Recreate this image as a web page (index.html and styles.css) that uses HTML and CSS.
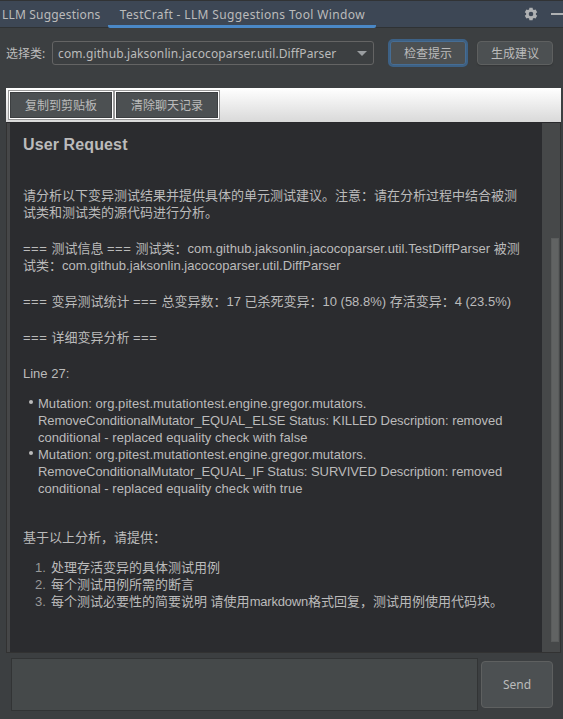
FILE: index.html
```html
<!DOCTYPE html>
<html lang="zh-CN">
<head>
<meta charset="utf-8">
<title>TestCraft</title>
<link rel="stylesheet" href="styles.css">
</head>
<body>
<div class="window">
  <header class="tabs">
    <div class="tab tab-first">LLM Suggestions</div>
    <div class="tab tab-active">TestCraft - LLM Suggestions Tool Window</div>
    <div class="tab-actions">
      <svg class="gear" width="14" height="14" viewBox="0 0 14 14"><path fill="#afb1b3" fill-rule="evenodd" d="M5.4 .7h3.2l.3 1.7 1.1.6 1.6-.6 1.6 2.8-1.3 1.1v1.4l1.3 1.1-1.6 2.8-1.6-.6-1.1.6-.3 1.7H5.4l-.3-1.7L4 11l-1.6.6L.8 8.800l1.300-1.100V6.300L.8 5.200l1.600-2.800L4 3l1.100-.6zM7 4.700a2.300 2.300 0 1 0 0 4.600a2.300 2.300 0 1 0 0-4.600z"/></svg>
      <span class="minimize"></span>
    </div>
  </header>
  <div class="toolbar">
    <span class="label">选择类:</span>
    <div class="combo"><span class="combo-text">com.github.jaksonlin.jacocoparser.util.DiffParser</span><span class="arrow"></span></div>
    <button class="btn focused">检查提示</button>
    <button class="btn suggest">生成建议</button>
  </div>
  <div class="chat-bar">
    <button class="chat-btn">复制到剪贴板</button>
    <button class="chat-btn">清除聊天记录</button>
  </div>
  <main class="chat">
    <article class="content">
      <h1>User Request</h1>
      <p class="intro">请分析以下变异测试结果并提供具体的单元测试建议。注意：请在分析过程中结合被测<br>试类和测试类的源代码进行分析。</p>
      <p><span class="eq">=== </span>测试信息 <span class="eq">=== </span>测试类：<span class="pkg">com.github.jaksonlin.jacocoparser.util.TestDiffParser</span> 被测<br>试类：<span class="pkg">com.github.jaksonlin.jacocoparser.util.DiffParser</span></p>
      <p><span class="eq">=== </span>变异测试统计 <span class="eq">=== </span>总变异数：17 已杀死变异：10 (58.8%) 存活变异：4 (23.5%)</p>
      <p><span class="eq">=== </span>详细变异分析 <span class="eq">=== </span></p>
      <p>Line 27:</p>
      <ul>
        <li><span class="pkg">Mutation: org.pitest.mutationtest.engine.gregor.mutators.</span><br><span class="tight">RemoveConditionalMutator_EQUAL_ELSE Status: KILLED Description: removed</span><br><span class="pkg">conditional - replaced equality check with false</span></li>
        <li><span class="pkg">Mutation: org.pitest.mutationtest.engine.gregor.mutators.</span><br><span class="tight">RemoveConditionalMutator_EQUAL_IF Status: SURVIVED Description: removed</span><br><span class="pkg">conditional - replaced equality check with true</span></li>
      </ul>
      <p class="ask">基于以上分析，请提供：</p>
      <ol>
        <li><span class="num">1.</span>处理存活变异的具体测试用例</li>
        <li><span class="num">2.</span>每个测试用例所需的断言</li>
        <li><span class="num">3.</span>每个测试必要性的简要说明 请使用<span class="word">markdown</span>格式回复，测试用例使用代码块。</li>
      </ol>
    </article>
    <div class="scrollbar"><div class="thumb"></div></div>
  </main>
  <footer class="composer">
    <div class="input"></div>
    <button class="btn send">Send</button>
  </footer>
</div>
</body>
</html>
```
FILE: styles.css
```css
* { box-sizing: border-box; }
body { margin: 0; background: #3c3f41; }
button { margin: 0; padding: 0; font: inherit; color: inherit; }
.window {
  width: 563px; height: 719px; overflow: hidden;
  display: flex; flex-direction: column;
  background: #3c3f41; color: #bbbbbb;
  font: 12px/18px "Noto Sans", "Noto Sans CJK SC", sans-serif;
  white-space: nowrap;
}
.tabs {
  display: flex; height: 28px; flex: none;
  background: #3d4755;
  border-top: 1px solid #313335; border-bottom: 1px solid #2f3234;
}
.tab { line-height: 27px; height: 27px; }
.tab-first { width: 108px; padding-left: 2px; letter-spacing: .18px; }
.tab-active { width: 269px; padding-left: 12px; letter-spacing: .36px; border-bottom: 3px solid #4a88c7; border-radius: 0 0 2px 2px; }
.tab-actions { display: flex; flex: 1; padding: 6px 0 0 148px; }
.gear { flex: none; }
.minimize { flex: none; width: 12px; height: 2px; margin: 6px 0 0 13px; background: #afb1b3; }
.toolbar { display: flex; align-items: center; height: 50px; flex: none; padding-left: 6px; }
.label { width: 46px; padding-top: 2px; }
.combo {
  display: flex; align-items: center; justify-content: space-between;
  width: 322px; height: 24px; padding: 0 6px 0 5px;
  border: 1px solid #646464; border-radius: 3px;
}
.combo-text { padding-top: 2px; letter-spacing: .12px; }
.arrow { border: 5px solid transparent; border-top: 5px solid #9a9da0; border-bottom: 0; }
.btn {
  border: 1px solid #5e6060; border-radius: 4px;
  background: #4c5052; text-align: center;
}
.toolbar .btn { height: 24px; width: 76px; line-height: 20px; padding-top: 2px; }
.toolbar .focused { width: 80px; height: 28px; margin: 0 9px 0 14px; border: 2px solid #3d6185; border-radius: 5px; box-shadow: inset 0 0 0 1px #466d94; }
.suggest { box-shadow: 0 1px 1px #343638; }
.chat-bar {
  display: flex; flex: none; height: 34px; margin: 10px 2px 0 6px; padding: 2px;
  background: linear-gradient(#ffffff, #d9d9d9);
}
.chat-btn {
  width: 106px; height: 30px; padding-top: 2px; color: #bbbbbb; background: #4c5052;
  border: 1px solid #999999; outline: 1px solid #3c3f41; outline-offset: -3px;
  box-shadow: inset 0 0 0 1px #ffffff;
}
.chat {
  display: flex; flex: none; height: 531px; margin: 0 2px 0 6px;
  border: 1px solid #323232; border-top-color: #29292c;
}
.content {
  width: 535px; padding: 13px 0 0 13px; border-left: 3px solid #464748;
  background: #2b2c2f;
  font: 13px/17px "Liberation Sans", "Noto Sans CJK SC", sans-serif;
}
h1 { margin: 0 0 33px; font-size: 16px; line-height: 18px; letter-spacing: .12px; }
p { margin: 0 0 19px; }
.eq { letter-spacing: .5px; }
.pkg { letter-spacing: .045px; }
.tight { letter-spacing: -.055px; }
.word { letter-spacing: -.2px; }
ul { list-style: none; margin: -6px 0 32px; padding: 0 0 0 15px; }
ul li::before {
  content: ""; float: left; width: 4px; height: 4px; margin: 5px 0 0 -9px;
  border-radius: 50%; background: #bbbbbb;
}
.ask { margin-bottom: 13px; }
ol { list-style: none; margin: 0; padding: 0 0 0 12px; }
.num { display: inline-block; width: 16px; color: #999999; }
.scrollbar { flex: 1; padding: 115px 1px 0 9px; background: #464849; }
.thumb { height: 404px; background: #616363; border: 1px solid #5a5c5c; }
.composer { display: flex; flex: none; align-items: center; gap: 3px; padding: 5px 0 0 11px; }
.input { width: 467px; height: 53px; background: #45494a; border: 1px solid #323435; }
.send { width: 72px; height: 47px; }
```
